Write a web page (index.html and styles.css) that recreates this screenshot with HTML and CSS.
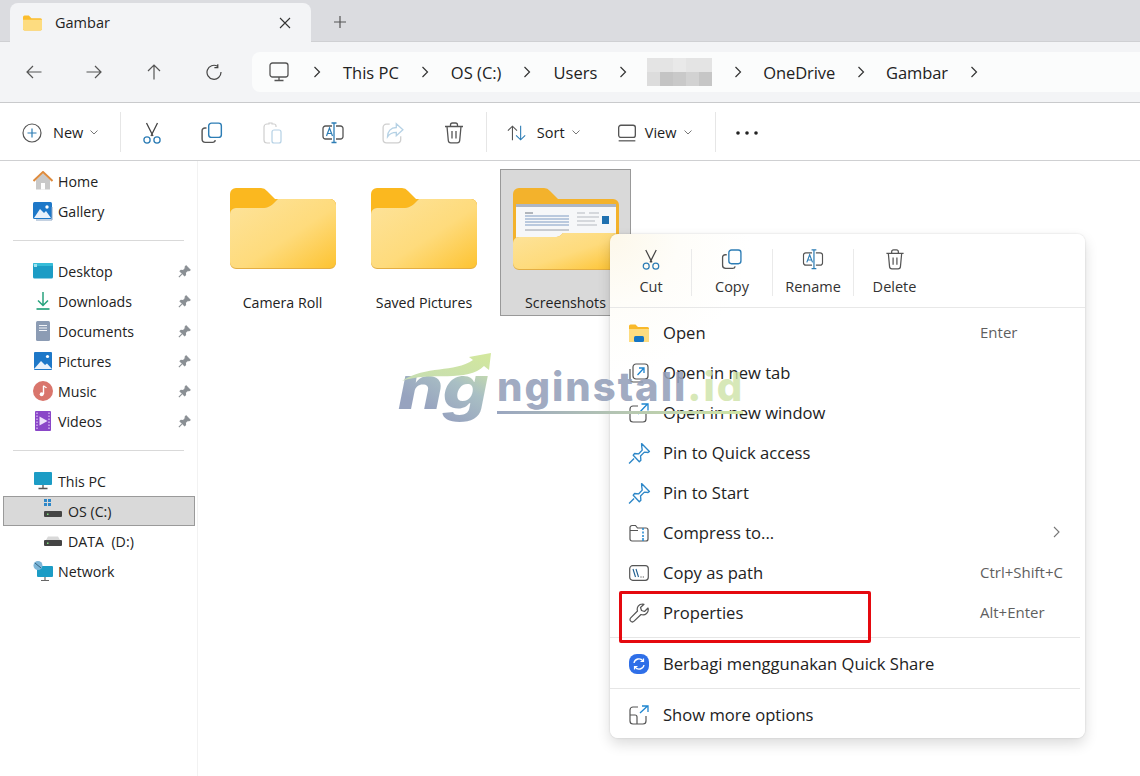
FILE: index.html
```html
<!DOCTYPE html>
<html lang="en">
<head>
<meta charset="utf-8">
<title>Gambar</title>
<link rel="stylesheet" href="styles.css">
</head>
<body>
<svg class="defs" width="0" height="0" aria-hidden="true">
  <defs>
    <linearGradient id="fg" x1="0" y1="0" x2="1" y2="1"><stop offset="0" stop-color="#fde39b"/><stop offset=".55" stop-color="#fedb7c"/><stop offset="1" stop-color="#fdc331"/></linearGradient>
    <linearGradient id="wg" x1="0" y1="1" x2="1" y2="0"><stop offset="0" stop-color="#c5dcb4"/><stop offset="1" stop-color="#d3e89c"/></linearGradient>
    <linearGradient id="ug" x1="0" y1="0" x2="1" y2="0"><stop offset="0" stop-color="#9aa6c0"/><stop offset="1" stop-color="#cfe5a4"/></linearGradient>
    <symbol id="i-cut" viewBox="0 0 20 22"><g fill="none" stroke-width="1.3"><path d="M4.5 1l6.5 13M15.5 1L9 14" stroke="#444"/><circle cx="5" cy="18" r="3.1" stroke="#2d7db5"/><circle cx="15" cy="18" r="3.1" stroke="#2d7db5"/></g></symbol>
    <symbol id="i-copy" viewBox="0 0 20 20"><rect x="7" y="1" width="11.5" height="13" rx="2.5" fill="none" stroke="#2d7db5" stroke-width="1.3"/><path d="M5 5.5H3.5A2.5 2.5 0 0 0 1 8v7.5A3 3 0 0 0 4 18.500h6.500a2.500 2.500 0 0 0 2.500-2" fill="none" stroke="#555" stroke-width="1.3"/></symbol>
    <symbol id="i-rename" viewBox="0 0 22 22"><path d="M10 4H3.500A2.500 2.500 0 0 0 1 6.500v8A2.500 2.500 0 0 0 3.500 17H10M14 4h4.500A2.500 2.500 0 0 1 21 6.500v8a2.500 2.500 0 0 1-2.500 2.500H14" fill="none" stroke="#555" stroke-width="1.300"/><path d="M9.500 1h5M9.500 20.500h5M12 1v19.500" fill="none" stroke="#2d7db5" stroke-width="1.300"/><path d="M4.500 14l3-8 3 8M5.500 11.500h4" fill="none" stroke="#2d7db5" stroke-width="1.200"/></symbol>
    <symbol id="i-trash" viewBox="0 0 20 22"><path d="M1 4.500h18M6.500 4.500V3A2 2 0 0 1 8.500 1h3a2 2 0 0 1 2 2v1.500M3 4.500l1.300 14a2.500 2.500 0 0 0 2.500 2.300h6.400a2.500 2.500 0 0 0 2.500-2.300L17 4.500M8 9v7.500M12 9v7.500" fill="none" stroke="#555" stroke-width="1.300"/></symbol>
    <symbol id="i-pin" viewBox="0 0 22 22"><path d="M13 1.500l7.500 7.500-1.300 1-3.500-.3-3.700 3.700.3 4-1.500 1.500L5 12.600 6.300 11l4 .3 3.300-3.500-.5-3.700zM5.800 15.800L1 20.500" fill="none" stroke="#2d87c8" stroke-width="1.300" stroke-linejoin="round"/></symbol>
    <symbol id="i-spin" viewBox="0 0 12 12"><path d="M7.500.8l3.700 3.700-1 .8-1.500-.2-1.900 1.900.2 2-.9.9L1.900 5.800l.9-.9 2 .2 1.900-1.900-.1-1.500zM3.500 8.500L.8 11.200" fill="#8a8f94" stroke="#8a8f94"/></symbol>
    <symbol id="i-drive" viewBox="0 0 18 10"><path d="M2 4L4 .5h10L16 4z" fill="#d9d9d9"/><rect y="4" width="18" height="6" rx="1" fill="#444"/><rect x="3" y="6.500" width="1.500" height="1.500" fill="#7fe07f"/></symbol>
    <symbol id="i-folder" viewBox="0 0 106 84"><path d="M0 7a6 6 0 0 1 6-6h25a8 8 0 0 1 6 3l8 8h55a6 6 0 0 1 6 6v55H0z" fill="#fbb81f"/><path d="M0 27a6 6 0 0 1 6-6h26c6 0 9-1 13-6l3-3h52a6 6 0 0 1 6 6v58a6 6 0 0 1-6 6H6a6 6 0 0 1-6-6z" fill="#e3ae44"/><path d="M0 27a6 6 0 0 1 6-6h26c6 0 9-2 13-6l3-3h52a6 6 0 0 1 6 6v57a6 6 0 0 1-6 6H6a6 6 0 0 1-6-6z" fill="url(#fg)"/></symbol>
  </defs>
</svg>

<div class="tabbar">
  <div class="tab">
    <svg class="tab-ico" viewBox="0 0 18 15"><path d="M0 2a1.500 1.500 0 0 1 1.500-1.500h4L8 3h8.500A1.500 1.500 0 0 1 18 4.500V13a1.500 1.500 0 0 1-1.500 1.500h-15A1.500 1.500 0 0 1 0 13z" fill="#fbbd2d"/><path d="M0 4.500h18V13a1.500 1.500 0 0 1-1.500 1.500h-15A1.500 1.500 0 0 1 0 13z" fill="#fddc80"/></svg>
    <span class="tab-title">Gambar</span>
    <svg class="tab-x" viewBox="0 0 12 12"><path d="M1 1l10 10M11 1L1 11" stroke="#333" stroke-width="1.100"/></svg>
  </div>
  <svg class="tab-plus" viewBox="0 0 12 12"><path d="M6 0v12M0 6h12" stroke="#555" stroke-width="1.200"/></svg>
</div>

<div class="navbar">
  <div class="navbtns">
    <svg class="nav-ico" viewBox="0 0 16 14"><path d="M15.500 7H1M7 1L1 7l6 6" fill="none" stroke="#555" stroke-width="1.200"/></svg>
    <svg class="nav-ico" viewBox="0 0 16 14"><path d="M.5 7H15M9 1l6 6-6 6" fill="none" stroke="#555" stroke-width="1.200"/></svg>
    <svg class="nav-ico" viewBox="0 0 16 16"><path d="M8 15.500V1M2 7l6-6 6 6" fill="none" stroke="#555" stroke-width="1.200"/></svg>
    <svg class="nav-ico" viewBox="0 0 16 16"><path d="M11.500 2.200A7 7 0 1 0 15 8M11.800 .2v3.400H8.400" fill="none" stroke="#444" stroke-width="1.200"/></svg>
  </div>
  <div class="address">
    <svg class="pc-ico" viewBox="0 0 20 20"><rect x="1" y="1" width="18" height="14" rx="2.500" fill="none" stroke="#555" stroke-width="1.300"/><path d="M10 15v3M5.500 18.500h9" stroke="#555" stroke-width="1.300"/></svg>
    <svg class="crumb-chev" viewBox="0 0 8 12"><path d="M1.500 1l5 5-5 5" fill="none" stroke="#333" stroke-width="1.200"/></svg>
    <span>This PC</span>
    <svg class="crumb-chev" viewBox="0 0 8 12"><path d="M1.500 1l5 5-5 5" fill="none" stroke="#333" stroke-width="1.200"/></svg>
    <span>OS (C:)</span>
    <svg class="crumb-chev" viewBox="0 0 8 12"><path d="M1.500 1l5 5-5 5" fill="none" stroke="#333" stroke-width="1.200"/></svg>
    <span>Users</span>
    <svg class="crumb-chev" viewBox="0 0 8 12"><path d="M1.500 1l5 5-5 5" fill="none" stroke="#333" stroke-width="1.200"/></svg>
    <svg class="pixelated" viewBox="0 0 65 28"><rect width="65" height="28" fill="#e4e4e4"/><rect y="14" width="13" height="14" fill="#dcdcdc"/><rect x="13" y="14" width="13" height="14" fill="#c4c4c4"/><rect x="26" y="14" width="13" height="14" fill="#c9c9c9"/><rect x="39" y="14" width="13" height="14" fill="#d2d2d2"/><rect x="52" y="14" width="13" height="14" fill="#c6c6c6"/><rect x="26" width="13" height="14" fill="#e9e9e9"/></svg>
    <svg class="crumb-chev" viewBox="0 0 8 12"><path d="M1.500 1l5 5-5 5" fill="none" stroke="#333" stroke-width="1.200"/></svg>
    <span class="tight">OneDrive</span>
    <svg class="crumb-chev" viewBox="0 0 8 12"><path d="M1.500 1l5 5-5 5" fill="none" stroke="#333" stroke-width="1.200"/></svg>
    <span class="tight">Gambar</span>
    <svg class="crumb-chev" viewBox="0 0 8 12"><path d="M1.500 1l5 5-5 5" fill="none" stroke="#333" stroke-width="1.200"/></svg>
  </div>
</div>

<div class="toolbar">
  <div class="tool-group new-group">
    <svg class="tool-ico" viewBox="0 0 20 20"><circle cx="10" cy="10" r="9" fill="none" stroke="#555" stroke-width="1.200"/><path d="M10 5.500v9M5.500 10h9" stroke="#2d7db5" stroke-width="1.200"/></svg>
    <span class="tool-label">New</span>
    <svg class="tool-chev" viewBox="0 0 8 5"><path d="M.5.500L4 4 7.500.5" fill="none" stroke="#777"/></svg>
  </div>
  <div class="sep"></div>
  <div class="icon-btns">
    <div class="icon-btn"><svg class="btn-ico" viewBox="0 0 20 22"><use href="#i-cut"/></svg></div>
    <div class="icon-btn"><svg class="btn-ico" viewBox="0 0 20 20"><use href="#i-copy"/></svg></div>
    <div class="icon-btn dim"><svg class="btn-ico" viewBox="0 0 20 22"><path d="M13 5V4a2 2 0 0 0-2-2H9V1H6v1H4a3 3 0 0 0-3 3v13a3 3 0 0 0 3 3h3" fill="none" stroke="#777" stroke-width="1.200"/><rect x="9" y="8" width="9" height="13" rx="2" fill="none" stroke="#2d7db5" stroke-width="1.200"/></svg></div>
    <div class="icon-btn"><svg class="btn-ico" viewBox="0 0 22 22"><use href="#i-rename"/></svg></div>
    <div class="icon-btn dim"><svg class="btn-ico" viewBox="0 0 20 20"><path d="M7 2H4a3 3 0 0 0-3 3v11a3 3 0 0 0 3 3h10a3 3 0 0 0 3-3v-3" fill="none" stroke="#777" stroke-width="1.200"/><path d="M13 1.500l6 5.500-6 5.500V9.500c-4 0-6 1-8 4 0-5 3-8.500 8-8.500z" fill="none" stroke="#2d7db5" stroke-width="1.200"/></svg></div>
    <div class="icon-btn"><svg class="btn-ico" viewBox="0 0 20 22"><use href="#i-trash"/></svg></div>
  </div>
  <div class="sep"></div>
  <div class="tool-group sort-group">
    <svg class="tool-ico" viewBox="0 0 22 18"><path d="M6 17V1.500M1 6.500l5-5 5 5" fill="none" stroke="#555" stroke-width="1.200"/><path d="M15 1v15.500M10 11.500l5 5 5-5" fill="none" stroke="#2d7db5" stroke-width="1.200"/></svg>
    <span class="tool-label">Sort</span>
    <svg class="tool-chev" viewBox="0 0 8 5"><path d="M.5.500L4 4 7.500.5" fill="none" stroke="#777"/></svg>
  </div>
  <div class="tool-group view-group">
    <svg class="tool-ico" viewBox="0 0 18 18"><rect x="1.500" y="2" width="15" height="11" rx="2" fill="none" stroke="#555" stroke-width="1.200"/><path d="M1.500 16h15" stroke="#777" stroke-width="1.400"/></svg>
    <span class="tool-label">View</span>
    <svg class="tool-chev" viewBox="0 0 8 5"><path d="M.5.500L4 4 7.500.5" fill="none" stroke="#777"/></svg>
  </div>
  <div class="sep"></div>
  <svg class="more" viewBox="0 0 22 4"><circle cx="2" cy="2" r="1.800" fill="#222"/><circle cx="11" cy="2" r="1.800" fill="#222"/><circle cx="20" cy="2" r="1.800" fill="#222"/></svg>
</div>

<div class="main">
  <nav class="sidebar">
    <div class="row">
      <svg class="side-ico" viewBox="0 0 20 20"><path d="M3 9v9.500h14V9L10 2.500z" fill="#c9c9c9"/><rect x="8" y="12" width="4" height="6.500" fill="#fff"/><path d="M.5 10L10 1l9.500 9" fill="none" stroke="#dd8b3e" stroke-width="2"/></svg>
      <span>Home</span>
    </div>
    <div class="row">
      <svg class="side-ico" viewBox="0 0 20 20"><rect y="1" width="19" height="17" rx="1.500" fill="#1e78c8"/><path d="M1 17l6-9 4 4 2-2 5 7z" fill="#eaf2fb"/><circle cx="14" cy="6" r="1.700" fill="#fff"/><path d="M3 19h16V6" fill="none" stroke="#8aa4c4"/></svg>
      <span>Gallery</span>
    </div>
    <div class="divider"></div>
    <div class="row">
      <svg class="side-ico" viewBox="0 0 20 16"><rect width="20" height="15.500" rx="1.500" fill="#1c9cc5"/><rect width="20" height="3" rx="1" fill="#36bcd8"/><rect x="1" y="1" width="3" height="3" fill="#9fe2ee"/></svg>
      <span class="grow">Desktop</span>
      <svg class="pin" viewBox="0 0 12 12"><use href="#i-spin"/></svg>
    </div>
    <div class="row">
      <svg class="side-ico" viewBox="0 0 20 20"><path d="M10 1v13M5 9.500l5 5 5-5" fill="none" stroke="#28a37d" stroke-width="1.500"/><path d="M3.500 18h13" stroke="#28a37d" stroke-width="1.700"/></svg>
      <span class="grow">Downloads</span>
      <svg class="pin" viewBox="0 0 12 12"><use href="#i-spin"/></svg>
    </div>
    <div class="row">
      <svg class="side-ico" viewBox="0 0 20 20"><rect x="3" y="0" width="14" height="20" rx="1.500" fill="#8c9cb4"/><path d="M6 4.500h8M6 7h8M6 9.500h8" stroke="#f2f4f8"/></svg>
      <span class="grow">Documents</span>
      <svg class="pin" viewBox="0 0 12 12"><use href="#i-spin"/></svg>
    </div>
    <div class="row">
      <svg class="side-ico" viewBox="0 0 20 20"><rect x="1" y="1" width="18" height="18" rx="1" fill="#1e78c8"/><path d="M1 18l7-8 4 4 2-1.500 5 5.500z" fill="#eaf2fb"/><circle cx="14.500" cy="5.500" r="1.600" fill="#fff"/></svg>
      <span class="grow">Pictures</span>
      <svg class="pin" viewBox="0 0 12 12"><use href="#i-spin"/></svg>
    </div>
    <div class="row">
      <svg class="side-ico" viewBox="0 0 20 20"><circle cx="10" cy="10" r="10" fill="#d9756c"/><path d="M10.500 5v8" stroke="#fff" stroke-width="1.400"/><path d="M10.500 4.500c1 1.500 2.500 1.500 3 2.500" fill="none" stroke="#fff" stroke-width="1.200"/><circle cx="8.700" cy="13.300" r="2" fill="#fff"/></svg>
      <span class="grow">Music</span>
      <svg class="pin" viewBox="0 0 12 12"><use href="#i-spin"/></svg>
    </div>
    <div class="row">
      <svg class="side-ico" viewBox="0 0 20 20"><rect x="2" y="0" width="16" height="20" rx="1" fill="#8a46c8"/><path d="M6.500 5.500l8 4.500-8 4.500z" fill="#ece0fa"/><path d="M4 1.500v17M16 1.500v17" stroke="#d5b5f0" stroke-width="1.400" stroke-dasharray="1.500 1.500"/></svg>
      <span class="grow">Videos</span>
      <svg class="pin" viewBox="0 0 12 12"><use href="#i-spin"/></svg>
    </div>
    <div class="divider"></div>
    <div class="row">
      <svg class="side-ico" viewBox="0 0 20 18"><rect x="1" y="0" width="18" height="13" rx="1" fill="#1c9cc5"/><path d="M10 13v3M5.500 16.500h9" stroke="#555" stroke-width="1.300"/></svg>
      <span>This PC</span>
    </div>
    <div class="row sub selected">
      <svg class="drive-ico os" viewBox="0 0 18 18"><rect x="0" y="0" width="3" height="3" fill="#2d87c8"/><rect x="4" y="0" width="3" height="3" fill="#2d87c8"/><rect x="0" y="4" width="3" height="3" fill="#2d87c8"/><rect x="4" y="4" width="3" height="3" fill="#2d87c8"/><use href="#i-drive" x="0" y="8" width="18" height="10"/></svg>
      <span>OS (C:)</span>
    </div>
    <div class="row sub">
      <svg class="drive-ico" viewBox="0 0 18 10"><use href="#i-drive"/></svg>
      <span>DATA&nbsp; (D:)</span>
    </div>
    <div class="row">
      <svg class="side-ico" viewBox="0 0 20 20"><rect x="4" y="5" width="16" height="11" rx="1" fill="#1c9cc5"/><path d="M12 16v3M8 19.500h8" stroke="#666" stroke-width="1.200"/><circle cx="5" cy="4.500" r="4.500" fill="#7db6d8"/><path d="M2 2l6 5" stroke="#35627f"/></svg>
      <span>Network</span>
    </div>
  </nav>

  <section class="files">
    <div class="tile">
      <svg class="folder" viewBox="0 0 106 84"><use href="#i-folder"/></svg>
      <span>Camera Roll</span>
    </div>
    <div class="tile">
      <svg class="folder" viewBox="0 0 106 84"><use href="#i-folder"/></svg>
      <span>Saved Pictures</span>
    </div>
    <div class="tile active">
      <svg class="folder" viewBox="0 0 106 84">
        <path d="M0 7a6 6 0 0 1 6-6h25a8 8 0 0 1 6 3l8 8h55a6 6 0 0 1 6 6v55H0z" fill="#f3b22c"/>
        <rect x="3" y="17" width="100" height="36" fill="#f6f7f9"/>
        <rect x="3" y="17" width="100" height="3" fill="#aeb6c4"/>
        <path d="M12 26h8" stroke="#6d7480"/>
        <path d="M12 29h44M12 32h44M12 35h44M12 38h44" stroke="#7f9cc4" stroke-width="1.200"/>
        <path d="M12 43h44" stroke="#9a9fa8"/>
        <path d="M64 26h8M76 26h10M64 30h22M64 34h18M64 38h20" stroke="#b5b9c0"/>
        <rect x="89" y="29" width="7" height="8" fill="#1f70b0"/>
        <path d="M0 56a6 6 0 0 1 6-6h36c4 0 5-1 8-4h50a6 6 0 0 1 6 6v25a6 6 0 0 1-6 6H6a6 6 0 0 1-6-6z" fill="#e3ae44"/>
        <path d="M0 56a6 6 0 0 1 6-6h36c4 0 5-1 8-4h50a6 6 0 0 1 6 6v24a6 6 0 0 1-6 6H6a6 6 0 0 1-6-6z" fill="url(#fg)"/>
      </svg>
      <span>Screenshots</span>
    </div>
  </section>
</div>

<div class="menu">
  <div class="menu-top">
    <div class="quick"><svg class="q-ico" viewBox="0 0 20 22"><use href="#i-cut"/></svg><span>Cut</span></div>
    <div class="quick"><svg class="q-ico" viewBox="0 0 20 20"><use href="#i-copy"/></svg><span>Copy</span></div>
    <div class="quick"><svg class="q-ico" viewBox="0 0 22 22"><use href="#i-rename"/></svg><span>Rename</span></div>
    <div class="quick last"><svg class="q-ico" viewBox="0 0 20 22"><use href="#i-trash"/></svg><span>Delete</span></div>
  </div>
  <div class="menu-list">
    <div class="item">
      <svg class="m-ico" viewBox="0 0 20 18"><path d="M0 2a1.500 1.500 0 0 1 1.500-1.500h5L9 3h9.500A1.500 1.500 0 0 1 20 4.500V18H0z" fill="#f9b92a"/><path d="M0 5h20v13H0z" fill="#fddc80"/><rect x="5" y="12" width="10" height="6" rx="1.500" fill="#1474c4"/></svg>
      <span class="m-label">Open</span><span class="m-key">Enter</span>
    </div>
    <div class="item">
      <svg class="m-ico" viewBox="0 0 20 20"><rect x="4" y="1" width="15" height="15" rx="3" fill="none" stroke="#555" stroke-width="1.200"/><path d="M1 6v10a3 3 0 0 0 3 3h10" fill="none" stroke="#555" stroke-width="1.200"/><path d="M8.500 12l6-6.500M10 5h5v5" fill="none" stroke="#1f86d0" stroke-width="1.300"/></svg>
      <span class="m-label">Open in new tab</span>
    </div>
    <div class="item">
      <svg class="m-ico" viewBox="0 0 20 20"><path d="M9 3H4a3 3 0 0 0-3 3v10a3 3 0 0 0 3 3h10a3 3 0 0 0 3-3v-5" fill="none" stroke="#555" stroke-width="1.200"/><path d="M9 11l9-9.500M12.500 1H19v6.500" fill="none" stroke="#1f86d0" stroke-width="1.300"/></svg>
      <span class="m-label">Open in new window</span>
    </div>
    <div class="item"><svg class="m-ico wide" viewBox="0 0 22 22"><use href="#i-pin"/></svg><span class="m-label">Pin to Quick access</span></div>
    <div class="item"><svg class="m-ico wide" viewBox="0 0 22 22"><use href="#i-pin"/></svg><span class="m-label">Pin to Start</span></div>
    <div class="item">
      <svg class="m-ico" viewBox="0 0 20 18"><path d="M1 3.500A2 2 0 0 1 3 1.500h3.500l2 2.500H17a2 2 0 0 1 2 2v9a2 2 0 0 1-2 2H3a2 2 0 0 1-2-2zM1 6.500h8" fill="none" stroke="#555" stroke-width="1.200"/><path d="M14 4v2M14 7.500v2M14 11v2M14 14v3" stroke="#1f86d0" stroke-width="1.500"/></svg>
      <span class="m-label">Compress to...</span>
      <span class="m-key"><svg class="m-chev" viewBox="0 0 7 12"><path d="M1 1l5 5-5 5" fill="none" stroke="#777" stroke-width="1.100"/></svg></span>
    </div>
    <div class="item">
      <svg class="m-ico" viewBox="0 0 20 16"><rect x=".7" y=".7" width="18.600" height="14.600" rx="3" fill="none" stroke="#555" stroke-width="1.200"/><path d="M4 4l2.500 8M7 4l2.500 8" stroke="#1f5f90" stroke-width="1.100"/><path d="M11.500 12h1M13.800 12h1" stroke="#333" stroke-width="1.200"/></svg>
      <span class="m-label">Copy as path</span><span class="m-key">Ctrl+Shift+C</span>
    </div>
    <div class="item">
      <svg class="m-ico" viewBox="0 0 20 20"><path d="M13.500 1a5.300 5.300 0 0 0-5 7L1.700 14.800a2.400 2.400 0 0 0 3.400 3.400L12 11.500a5.300 5.300 0 0 0 7-6.500l-3.500 3.500-3-1-1-3L15 1.300A5 5 0 0 0 13.500 1z" fill="none" stroke="#555" stroke-width="1.200" stroke-linejoin="round"/></svg>
      <span class="m-label">Properties</span><span class="m-key">Alt+Enter</span>
    </div>
  </div>
  <div class="menu-line"></div>
  <div class="item">
    <svg class="m-ico" viewBox="0 0 20 20"><rect width="20" height="20" rx="8" fill="#2f6fe8"/><path d="M5 9a5 5 0 0 1 9-2M15 11a5 5 0 0 1-9 2" fill="none" stroke="#fff" stroke-width="1.300"/><path d="M14.500 4.500V7.500H11.500M5.500 15.500V12.500H8.500" fill="none" stroke="#fff" stroke-width="1.200"/></svg>
    <span class="m-label">Berbagi menggunakan Quick Share</span>
  </div>
  <div class="menu-line"></div>
  <div class="item">
    <svg class="m-ico" viewBox="0 0 20 20"><path d="M9 2H4a3 3 0 0 0-3 3v11a3 3 0 0 0 3 3h10a3 3 0 0 0 3-3v-5M1 10h5a2 2 0 0 1 2 2v7" fill="none" stroke="#555" stroke-width="1.200"/><path d="M11 8l7-6.500M13 1h6v6" fill="none" stroke="#1f86d0" stroke-width="1.300"/></svg>
    <span class="m-label">Show more options</span>
  </div>
</div>

<div class="redbox"></div>

<div class="watermark">
  <span class="wm-ng">ng</span>
  <svg class="wm-arrow" viewBox="0 0 96 50"><path d="M6 28C30 12 58 20 77 7l-4-3L95 0l-2 17-5-4C72 30 34 18 6 28z" fill="url(#wg)"/></svg>
  <div class="wm-brand">
    <span class="wm-text">nginstall<b>.id</b></span>
    <svg class="wm-line" viewBox="0 0 246 3" preserveAspectRatio="none"><rect width="246" height="3" fill="url(#ug)"/></svg>
  </div>
</div>
</body>
</html>
```

FILE: styles.css
```css
* { box-sizing: border-box; }
html, body { margin: 0; padding: 0; }
body {
  position: relative;
  width: 1140px;
  height: 776px;
  overflow: hidden;
  background: #fff;
  color: #1c1c1c;
  font-family: "Open Sans", "Noto Sans", sans-serif;
  font-size: 14px;
}
.defs { position: absolute; }
svg { display: block; flex: none; }

/* tab strip */
.tabbar {
  display: flex;
  align-items: center;
  height: 42px;
  padding: 3px 0 0 10px;
  background: #dbdce0;
  border-bottom: 1px solid #cfd0d3;
}
.tab {
  display: flex;
  align-items: center;
  width: 301px;
  height: 39px;
  margin-bottom: -1px;
  padding: 0 20px 0 13px;
  background: #f3f4f6;
  border-radius: 8px 8px 0 0;
}
.tab-ico { width: 19px; height: 16px; }
.tab-title { flex: 1; margin-left: 13px; font-size: 14.5px; font-weight: 500; color: #222; }
.tab-x { width: 12px; height: 12px; }
.tab-plus { width: 12px; height: 12px; margin-left: 23px; }

/* navigation */
.navbar {
  display: flex;
  align-items: center;
  height: 61px;
  background: #f3f4f6;
  border-bottom: 1px solid #c9cacc;
}
.navbtns {
  display: flex;
  align-items: center;
  width: 252px;
  padding-left: 26px;
  gap: 44px;
}
.nav-ico { width: 16px; height: 16px; }
.address {
  flex: 1;
  display: flex;
  align-items: center;
  gap: 22px;
  height: 40px;
  padding-left: 17px;
  background: #fbfcfc;
  border-radius: 8px 0 0 8px;
  font-size: 16.5px;
  color: #222;
}
.pc-ico { width: 20px; height: 20px; margin-right: 2px; }
.crumb-chev { width: 8px; height: 12px; }
.pixelated { width: 65px; height: 28px; margin-left: -2px; }
.tight { margin-left: -1px; letter-spacing: -.1px; }

/* command bar */
.toolbar {
  display: flex;
  align-items: center;
  height: 58px;
  padding-top: 2px;
  background: #fff;
  border-bottom: 1px solid #cfd0d2;
}
.tool-group { display: flex; align-items: center; }
.new-group { width: 120px; padding-left: 22px; }
.tool-ico { width: 20px; height: 20px; }
.tool-label { margin-left: 11px; font-size: 14.5px; }
.tool-chev { width: 8px; height: 5px; margin-left: 7px; }
.sep { width: 1px; height: 40px; margin-top: -2px; background: #e6e6e6; }
.icon-btns { display: flex; padding: 0 2px 0 1px; }
.icon-btn { display: flex; justify-content: center; width: 60.3px; }
.btn-ico { width: 22px; height: 22px; }
.dim { opacity: .35; }
.sort-group { width: 110px; padding-left: 20px; }
.sort-group .tool-label { margin-left: 10px; }
.view-group { width: 118px; padding-left: 20px; }
.view-group .tool-label { margin-left: 8px; }
.view-group .tool-chev { margin-left: 8px; }
.more { width: 22px; height: 4px; margin-left: 20px; }

/* body */
.main { display: flex; height: 615px; }
.sidebar {
  width: 198px;
  padding-top: 5px;
  border-right: 1px solid #f2f2f2;
}
.row {
  display: flex;
  align-items: center;
  height: 30px;
  padding: 0 6px 0 33px;
  font-size: 14.2px;
  color: #222;
}
.side-ico { width: 20px; height: 20px; margin-right: 5px; }
.grow { flex: 1; }
.pin { width: 13px; height: 13px; }
.divider {
  height: 1px;
  margin: 14px 13px 15px 13px;
  background: #d9d9d9;
}
.sub { padding-left: 44px; }
.drive-ico { width: 18px; height: 10px; margin-right: 6px; }
.drive-ico.os { height: 18px; margin-top: -6px; }
.selected {
  width: 192px;
  margin-left: 3px;
  padding-left: 40px;
  background: #d9d9d9;
  border: 1px solid #9a9a9a;
}
.files {
  flex: 1;
  display: flex;
  align-items: flex-start;
  gap: 10.5px;
  padding: 8px 0 0 19px;
}
.tile {
  display: flex;
  flex-direction: column;
  align-items: center;
  width: 131px;
  height: 147px;
  padding-top: 17px;
  border: 1px solid transparent;
  font-size: 14.2px;
  color: #222;
}
.active { background: #d9d9d9; border-color: #999; }
.folder { width: 106px; height: 84px; margin-bottom: 22px; }

/* context menu */
.menu {
  position: absolute;
  left: 610px;
  top: 234px;
  width: 475px;
  height: 504px;
  background: radial-gradient(circle at 0 0, #fdf8ea 0, #fefdf9 70px, #fff 140px);
  border-radius: 8px;
  box-shadow: 0 0 2px rgba(0,0,0,.16), 0 6px 14px rgba(0,0,0,.14);
}
.menu-top {
  display: flex;
  align-items: flex-start;
  height: 74px;
  padding: 15px 0 0 1px;
  border-bottom: 1px solid #e8e8e8;
}
.quick {
  display: flex;
  flex-direction: column;
  align-items: center;
  width: 81px;
  height: 47px;
  border-right: 1px solid #eaeaea;
  font-size: 14.5px;
  color: #333;
}
.quick span { margin-top: 7px; line-height: 20px; }
.last { border-right: 0; }
.q-ico { width: 22px; height: 21px; }
.menu-list { padding-top: 5px; }
.item {
  display: flex;
  align-items: center;
  height: 40px;
  padding: 0 5px 0 19px;
  font-size: 16.6px;
  color: #222;
}
.m-ico { width: 20px; height: 20px; margin-right: 14px; }
.m-ico.wide { width: 23px; height: 23px; margin: 0 12px 0 -1px; }
.m-label { flex: 1; white-space: nowrap; padding-bottom: 2px; }
.m-key { width: 100px; padding-bottom: 2px; font-size: 15px; color: #5f5f5f; }
.m-chev { width: 7px; height: 12px; margin-left: 73px; }
.menu-line { height: 1px; margin: 4px 5px 6px 0; background: #e6e6e6; }
.redbox {
  position: absolute;
  left: 619px;
  top: 591px;
  width: 252px;
  height: 52px;
  border: 3px solid #e5090f;
  border-radius: 2px;
}

/* watermark */
.watermark {
  position: absolute;
  left: 396px;
  top: 353px;
  width: 350px;
  height: 72px;
  pointer-events: none;
}
.wm-arrow { position: absolute; left: 0; top: 0; width: 96px; height: 50px; }
.wm-ng {
  position: absolute;
  left: 2px;
  top: -1px;
  font-family: "Inter", sans-serif;
  font-size: 60px;
  font-weight: 800;
  font-style: italic;
  letter-spacing: -1px;
  line-height: 70px;
  transform: scaleX(1.2);
  transform-origin: 0 50%;
  background: linear-gradient(35deg, #97a3bf 25%, #a9bfc4 60%, #cde3a6 90%);
  -webkit-background-clip: text;
  background-clip: text;
  color: transparent;
}
.wm-brand { position: absolute; left: 101px; top: 11px; }
.wm-text {
  display: block;
  font-family: "Inter", sans-serif;
  font-size: 40px;
  font-weight: 800;
  line-height: 46px;
  letter-spacing: 2px;
  color: rgba(148,160,186,.9);
  white-space: nowrap;
}
.wm-text b { font-weight: 800; color: rgba(205,226,165,.8); }
.wm-line { width: 246px; height: 3px; margin-top: 1px; }
```
